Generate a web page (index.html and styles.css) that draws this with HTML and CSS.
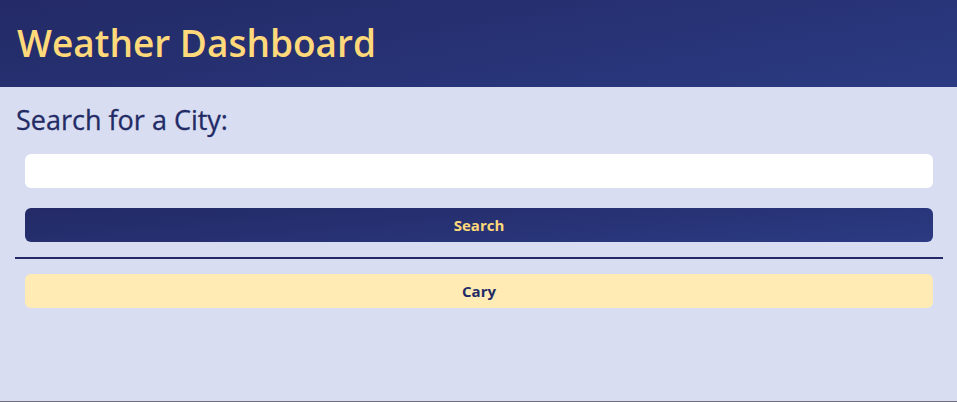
FILE: index.html
```
<!DOCTYPE html>
<html>
<head>
<meta charset="utf-8">
<link rel="stylesheet" href="styles.css">
</head>
<body>
<div class="page">
  <header class="header">
    <h1 class="title">Weather Dashboard</h1>
  </header>
  <main class="main">
    <h2 class="subtitle">Search for a City:</h2>
    <div class="form">
      <input class="city-input" type="text">
      <button class="btn btn-search">Search</button>
    </div>
    <hr class="divider">
    <div class="history">
      <button class="btn btn-history">Cary</button>
    </div>
  </main>
</div>
</body>
</html>
```
FILE: styles.css
```
html, body {
  margin: 0;
  padding: 0;
}
body {
  font-family: "Open Sans", "Noto Sans", sans-serif;
  background: #d9ddf1;
}
.page {
  min-height: 100vh;
  box-sizing: border-box;
  border-bottom: 1px solid #6e7080;
  display: flex;
  flex-direction: column;
}
.header {
  height: 87px;
  box-sizing: border-box;
  background: linear-gradient(170deg, #232a66 0%, #2b3a82 100%);
  display: flex;
  align-items: center;
  padding-left: 17px;
}
.title {
  margin: 0 0 2px 0;
  color: #ffd97a;
  font-size: 37px;
  font-weight: 600;
  line-height: 1;
}
.main {
  padding: 0 14px 0 15px;
}
.subtitle {
  margin: 17px 0 0 1px;
  font-size: 27px;
  font-weight: 500;
  color: #232b66;
  line-height: 32px;
  -webkit-text-stroke: 0.3px #232b66;
}
.form {
  display: flex;
  flex-direction: column;
  gap: 20px;
  padding: 0 10px;
  margin-top: 18px;
}
.city-input {
  height: 34px;
  border: none;
  border-radius: 6px;
  background: #fff;
  box-sizing: border-box;
  margin: 0;
}
.btn {
  display: block;
  width: 100%;
  height: 34px;
  border: none;
  border-radius: 6px;
  font-family: "Open Sans", "Noto Sans", sans-serif;
  font-size: 15px;
  font-weight: 700;
  cursor: pointer;
  margin: 0;
}
.btn-search {
  background: linear-gradient(175deg, #232a66 0%, #2b3a82 100%);
  color: #ffd97a;
}
.divider {
  margin: 15px 0 0 0;
  border: none;
  height: 2px;
  background: #232b66;
}
.history {
  padding: 0 10px;
  margin-top: 15px;
}
.btn-history {
  background: #ffebb3;
  color: #232b66;
}
```
